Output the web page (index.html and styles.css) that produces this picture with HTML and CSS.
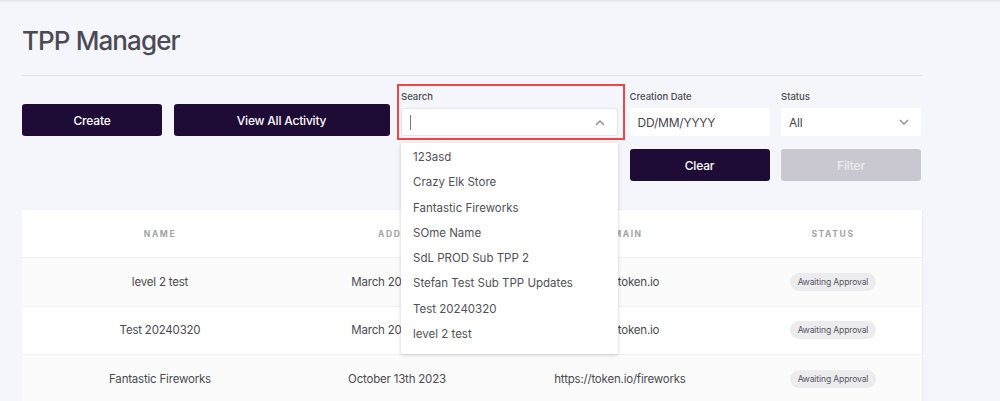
FILE: index.html
```html
<!DOCTYPE html>
<html>
<head>
<meta charset="utf-8">
<link rel="stylesheet" href="styles.css">
</head>
<body>
<div class="topbar"></div>
<main class="page">
  <h1 class="title">TPP Manager</h1>
  <div class="divider"></div>
  <section class="filters">
    <button class="btn btn-dark create">Create</button>
    <button class="btn btn-dark activity">View All Activity</button>
    <div class="field search">
      <label class="label">Search</label>
      <div class="input search-input">
        <span class="caret"></span>
        <svg class="chev" width="10" height="6" viewBox="0 0 10 6"><path d="M1 5 L5 1 L9 5" fill="none" stroke="#8a8a92" stroke-width="1.3"/></svg>
      </div>
      <ul class="dropdown">
        <li>123asd</li>
        <li>Crazy Elk Store</li>
        <li>Fantastic Fireworks</li>
        <li>SOme Name</li>
        <li>SdL PROD Sub TPP 2</li>
        <li>Stefan Test Sub TPP Updates</li>
        <li>Test 20240320</li>
        <li>level 2 test</li>
      </ul>
    </div>
    <div class="field date">
      <label class="label">Creation Date</label>
      <div class="input"><span class="value">DD/MM/YYYY</span></div>
    </div>
    <div class="field status">
      <label class="label">Status</label>
      <div class="input"><span class="value">All</span>
        <svg class="chev" width="10" height="6" viewBox="0 0 10 6"><path d="M1 1 L5 5 L9 1" fill="none" stroke="#8a8a92" stroke-width="1.3"/></svg>
      </div>
    </div>
    <button class="btn btn-dark clear">Clear</button>
    <button class="btn btn-disabled filter">Filter</button>
  </section>
  <section class="card">
    <div class="row head">
      <div>NAME</div><div>ADDED</div><div>DOMAIN</div><div>STATUS</div>
    </div>
    <div class="row alt">
      <div>level 2 test</div><div>March 20th 2024</div><div>https://token.io</div><div><span class="badge">Awaiting Approval</span></div>
    </div>
    <div class="row">
      <div>Test 20240320</div><div>March 20th 2024</div><div>https://token.io</div><div><span class="badge">Awaiting Approval</span></div>
    </div>
    <div class="row alt">
      <div>Fantastic Fireworks</div><div>October 13th 2023</div><div>https://token.io/fireworks</div><div><span class="badge">Awaiting Approval</span></div>
    </div>
  </section>
</main>
</body>
</html>
```

FILE: styles.css
```css
* { box-sizing: border-box; }
html, body { margin: 0; padding: 0; }
body {
  background: #f5f6fb;
  font-family: "Inter", "Lato", sans-serif;
  color: #4a4a52;
  width: 1000px;
  height: 401px;
  overflow: hidden;
  position: relative;
}
.topbar {
  height: 3px;
  background: linear-gradient(#e3e4ea, #f5f6fb);
}
.page {
  padding: 0 78px 0 22px;
}
.title {
  margin: 0;
  padding-top: 21px;
  font-size: 26px;
  font-weight: 500;
  line-height: 34px;
  color: #4b4b55;
  letter-spacing: -0.9px;
}
.divider {
  margin-top: 17px;
  height: 1px;
  background: #e2e3e8;
}
.filters {
  margin-top: 15px;
  display: grid;
  grid-template-columns: 140px 216px 217px 140px 140px;
  column-gap: 11.5px;
  row-gap: 13px;
  align-items: end;
}
.btn {
  height: 32px;
  border: none;
  border-radius: 3px;
  font-family: inherit;
  font-size: 12px;
  font-weight: 500;
  padding: 0;
  letter-spacing: -0.2px;
}
.btn-dark { background: #1e0b36; color: #fff; }
.btn-disabled { background: #c9c8d1; color: #ecebf0; }
.create { grid-column: 1; grid-row: 1; }
.activity { grid-column: 2; grid-row: 1; }
.search { grid-column: 3; grid-row: 1; }
.date { grid-column: 4; grid-row: 1; }
.status { grid-column: 5; grid-row: 1; }
.clear { grid-column: 4; grid-row: 2; }
.filter { grid-column: 5; grid-row: 2; }
.field { position: relative; display: flex; flex-direction: column; }
.label {
  font-size: 9.5px;
  font-weight: 500;
  color: #4a4a52;
  line-height: 12px;
  margin-bottom: 5px;
}
.input {
  height: 28px;
  background: #fff;
  border-radius: 3px;
  display: flex;
  align-items: center;
  padding: 0 8px;
  position: relative;
}
.search-input { border: 1px solid #e4e4ea; }
.value { font-size: 12px; color: #45454d; letter-spacing: -0.2px; }
.caret { width: 1px; height: 15px; background: #777; }
.chev { position: absolute; right: 12px; top: 11px; }
.search::before {
  content: "";
  position: absolute;
  left: -4px;
  top: -7px;
  right: -7px;
  bottom: -4px;
  border: 2.5px solid #f04545;
  pointer-events: none;
}
.dropdown {
  position: absolute;
  left: 0;
  right: 0;
  top: 52px;
  margin: 0;
  padding: 2px 0 7px;
  list-style: none;
  background: #fff;
  border-radius: 0 0 3px 3px;
  box-shadow: 0 1px 4px rgba(0,0,0,0.18);
  z-index: 5;
}
.dropdown li {
  height: 25.3px;
  line-height: 25.3px;
  padding-left: 12px;
  font-size: 11.5px;
  color: #505058;
}
.card {
  margin-top: 29px;
  background: #fff;
  box-shadow: 1px 0 2px rgba(0,0,0,0.05);
}
.row {
  display: grid;
  grid-template-columns: 276px 198px 248px 178px;
  height: 48.5px;
  align-items: center;
  text-align: center;
  font-size: 11.5px;
  letter-spacing: -0.2px;
  color: #4a4a52;
  border-top: 1px solid #f1f1f3;
}
.row.head {
  height: 47px;
  border-top: none;
  font-size: 8.5px;
  font-weight: 700;
  letter-spacing: 1.6px;
  color: #a2a2aa;
}
.row.alt { background: #fbfbfb; }
.badge {
  display: inline-block;
  background: #ececee;
  border-radius: 9px;
  padding: 0 8px;
  height: 18px;
  line-height: 18px;
  font-size: 8.5px;
  letter-spacing: -0.1px;
  color: #55555d;
}
```
